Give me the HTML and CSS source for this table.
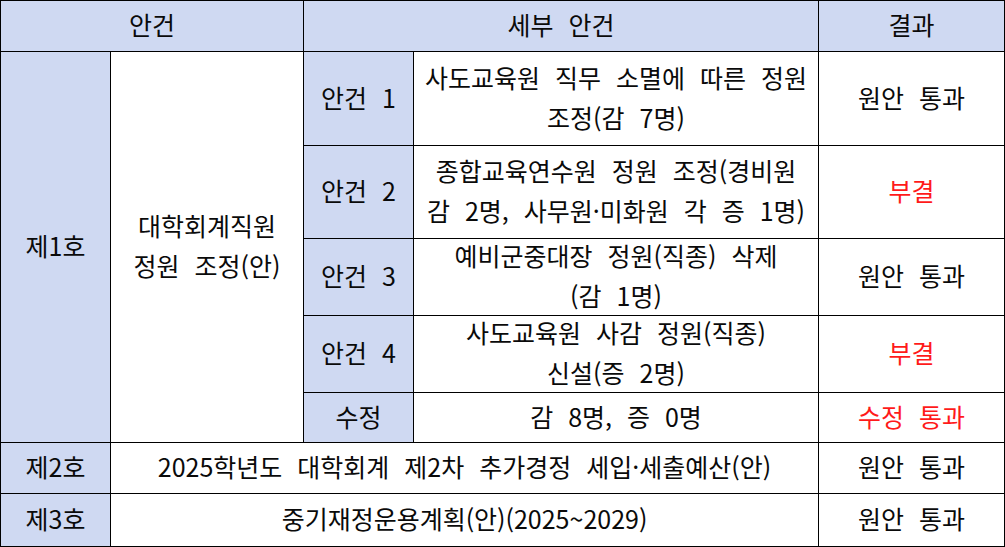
FILE: index.html
```html
<!DOCTYPE html>
<html lang="ko">
<head>
<meta charset="utf-8">
<link rel="stylesheet" href="styles.css">
</head>
<body>
<div class="sheet">
  <div class="cell head c-1-2">안건</div>
  <div class="cell head c-3-4">세부 안건</div>
  <div class="cell head">결과</div>

  <div class="cell head r-2-6 c-1">제1호</div>
  <div class="cell r-2-6 c-2"><span>대학회계직원</span><span>정원 조정(안)</span></div>

  <div class="cell head">안건 1</div>
  <div class="cell"><span>사도교육원 직무 소멸에 따른 정원</span><span>조정(감 7명)</span></div>
  <div class="cell">원안 통과</div>

  <div class="cell head">안건 2</div>
  <div class="cell"><span>종합교육연수원 정원 조정(경비원</span><span>감 2명, 사무원·미화원 각 증 1명)</span></div>
  <div class="cell red">부결</div>

  <div class="cell head">안건 3</div>
  <div class="cell"><span>예비군중대장 정원(직종) 삭제</span><span>(감 1명)</span></div>
  <div class="cell">원안 통과</div>

  <div class="cell head">안건 4</div>
  <div class="cell"><span>사도교육원 사감 정원(직종)</span><span>신설(증 2명)</span></div>
  <div class="cell red">부결</div>

  <div class="cell head">수정</div>
  <div class="cell">감 8명, 증 0명</div>
  <div class="cell red">수정 통과</div>

  <div class="cell head">제2호</div>
  <div class="cell c-2-4">2025학년도 대학회계 제2차 추가경정 세입·세출예산(안)</div>
  <div class="cell">원안 통과</div>

  <div class="cell head">제3호</div>
  <div class="cell c-2-4">중기재정운용계획(안)(2025~2029)</div>
  <div class="cell">원안 통과</div>
</div>
</body>
</html>
```

FILE: styles.css
```css
html, body {
  margin: 0;
  padding: 0;
  background: #ffffff;
}

.sheet {
  width: 1005px;
  height: 547px;
  box-sizing: border-box;
  display: grid;
  grid-template-columns: 109px 192px 109px 404px 185px;
  grid-template-rows: 50px 93px 92px 76px 76px 49px 50px 52px;
  gap: 1px;
  padding: 1px;
  background: #000000;
  font-family: "Noto Sans CJK KR", "Noto Sans", sans-serif;
  font-size: 25px;
  word-spacing: 8px;
  color: #0a0a0a;
}

.cell {
  box-sizing: border-box;
  background: #ffffff;
  display: flex;
  flex-direction: column;
  align-items: center;
  justify-content: center;
  text-align: center;
  line-height: 40px;
  padding-bottom: 4px;
  white-space: nowrap;
  overflow: visible;
}

.cell span {
  display: block;
}

.head {
  background: #cfd9f2;
}

.red {
  color: #ff1a1a;
}

.c-1-2 { grid-column: 1 / 3; }
.c-3-4 { grid-column: 3 / 5; }
.c-2-4 { grid-column: 2 / 5; }
.c-1 { grid-column: 1; }
.c-2 { grid-column: 2; }
.r-2-6 { grid-row: 2 / 7; }
```
